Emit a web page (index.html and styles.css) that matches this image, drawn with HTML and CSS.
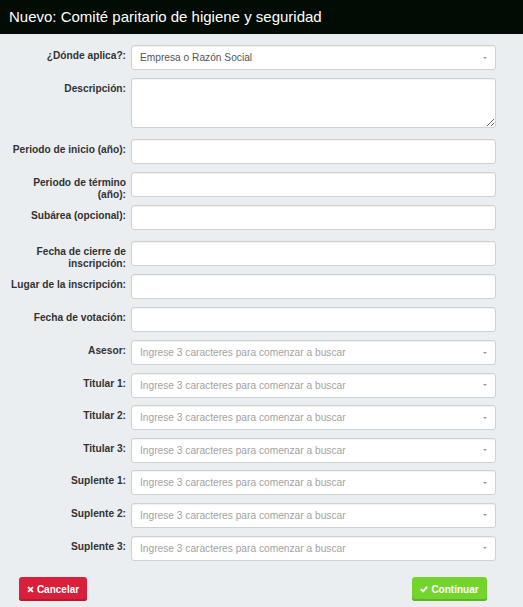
FILE: index.html
```html
<!DOCTYPE html>
<html lang="es">
<head>
<meta charset="utf-8">
<title>Nuevo: Comité paritario de higiene y seguridad</title>
<link rel="stylesheet" href="styles.css">
</head>
<body>
<div class="modal">
  <div class="modal-header">Nuevo: Comité paritario de higiene y seguridad</div>
  <form class="modal-body">
    <div class="row">
      <label class="lbl">¿Dónde aplica?:</label>
      <div class="ctrl select"><span class="val">Empresa o Razón Social</span><span class="caret"></span></div>
    </div>
    <div class="row row-area">
      <label class="lbl">Descripción:</label>
      <textarea class="ctrl area"></textarea>
    </div>
    <div class="row">
      <label class="lbl">Periodo de inicio (año):</label>
      <input class="ctrl" type="text">
    </div>
    <div class="row">
      <label class="lbl">Periodo de término (año):</label>
      <input class="ctrl" type="text">
    </div>
    <div class="row row-wide">
      <label class="lbl">Subárea (opcional):</label>
      <input class="ctrl" type="text">
    </div>
    <div class="row">
      <label class="lbl">Fecha de cierre de inscripción:</label>
      <input class="ctrl" type="text">
    </div>
    <div class="row">
      <label class="lbl">Lugar de la inscripción:</label>
      <input class="ctrl" type="text">
    </div>
    <div class="row">
      <label class="lbl">Fecha de votación:</label>
      <input class="ctrl" type="text">
    </div>
    <div class="row row-sel">
      <label class="lbl">Asesor:</label>
      <div class="ctrl select"><span class="ph">Ingrese 3 caracteres para comenzar a buscar</span><span class="caret"></span></div>
    </div>
    <div class="row row-sel">
      <label class="lbl">Titular 1:</label>
      <div class="ctrl select"><span class="ph">Ingrese 3 caracteres para comenzar a buscar</span><span class="caret"></span></div>
    </div>
    <div class="row row-sel">
      <label class="lbl">Titular 2:</label>
      <div class="ctrl select"><span class="ph">Ingrese 3 caracteres para comenzar a buscar</span><span class="caret"></span></div>
    </div>
    <div class="row row-sel">
      <label class="lbl">Titular 3:</label>
      <div class="ctrl select"><span class="ph">Ingrese 3 caracteres para comenzar a buscar</span><span class="caret"></span></div>
    </div>
    <div class="row row-sel">
      <label class="lbl">Suplente 1:</label>
      <div class="ctrl select"><span class="ph">Ingrese 3 caracteres para comenzar a buscar</span><span class="caret"></span></div>
    </div>
    <div class="row row-sel">
      <label class="lbl">Suplente 2:</label>
      <div class="ctrl select"><span class="ph">Ingrese 3 caracteres para comenzar a buscar</span><span class="caret"></span></div>
    </div>
    <div class="row row-sel">
      <label class="lbl">Suplente 3:</label>
      <div class="ctrl select"><span class="ph">Ingrese 3 caracteres para comenzar a buscar</span><span class="caret"></span></div>
    </div>
    <div class="footer">
      <button type="button" class="btn btn-danger"><svg class="ico" viewBox="0 0 10 10" width="7" height="7"><path d="M1.5 1.5 L8.5 8.5 M8.5 1.5 L1.5 8.5" stroke="#fff" stroke-width="2.6" stroke-linecap="butt"/></svg>Cancelar</button>
      <button type="button" class="btn btn-success"><svg class="ico" viewBox="0 0 10 10" width="8" height="8"><path d="M1 5.2 L3.8 8 L9 2.2" fill="none" stroke="#fff" stroke-width="2.4"/></svg>Continuar</button>
    </div>
  </form>
</div>
</body>
</html>
```

FILE: styles.css
```css
html, body {
  margin: 0;
  padding: 0;
}
body {
  background: #eaeef0;
  font-family: "Liberation Sans", Arial, sans-serif;
  color: #333;
}
.modal {
  width: 523px;
  height: 607px;
  background: #eaeef0;
}
.modal-header {
  height: 34px;
  line-height: 34px;
  background: #020b04;
  color: #fff;
  font-size: 15px;
  padding-left: 9px;
  box-sizing: border-box;
}
.modal-body {
  display: flex;
  flex-direction: column;
  padding-top: 11px;
  margin: 0;
}
.row {
  display: flex;
  align-items: flex-start;
  height: 25px;
  margin-bottom: 8px;
}
.row-sel {
  margin-bottom: 7.6px;
}
.row-area {
  height: 50px;
  margin-bottom: 11px;
}
.row-wide {
  margin-bottom: 11px;
}
.lbl {
  width: 126px;
  flex: none;
  text-align: right;
  font-weight: bold;
  font-size: 10.2px;
  line-height: 12px;
  padding: 5px 0 0 10px;
  color: #333;
  box-sizing: border-box;
}
.ctrl {
  margin: 0 0 0 5px;
  width: 365px;
  height: 25px;
  box-sizing: border-box;
  border: 1px solid #cfd2d4;
  border-radius: 3px;
  background: #fff;
  box-shadow: inset 0 1px 1px rgba(0,0,0,0.06);
  font-family: "Liberation Sans", Arial, sans-serif;
  font-size: 10.2px;
  padding: 0 8px;
  outline: none;
}
.area {
  height: 50px;
  resize: vertical;
  padding: 4px 8px;
}
.select {
  display: flex;
  align-items: center;
  justify-content: space-between;
  position: relative;
}
.val {
  color: #555;
}
.ph {
  color: #a2a2a2;
}
.caret {
  width: 0;
  height: 0;
  border-left: 2px solid transparent;
  border-right: 2px solid transparent;
  border-top: 2px solid #9a9a9a;
  margin-right: 0;
}
.footer {
  display: flex;
  justify-content: space-between;
  padding: 9px 36px 0 19px;
}
.btn {
  height: 24px;
  border: none;
  border-radius: 3px;
  color: #fff;
  font-family: "Liberation Sans", Arial, sans-serif;
  font-weight: bold;
  font-size: 10px;
  display: flex;
  align-items: center;
  justify-content: center;
  gap: 3px;
  padding: 0;
  cursor: pointer;
}
.btn-danger {
  width: 68px;
  background: #da1f3d;
  box-shadow: inset 0 -2px 0 #b7192f;
}
.btn-success {
  width: 75px;
  background: #72d42d;
  box-shadow: inset 0 -2px 0 #5db322;
}
.ico {
  display: block;
}
```
